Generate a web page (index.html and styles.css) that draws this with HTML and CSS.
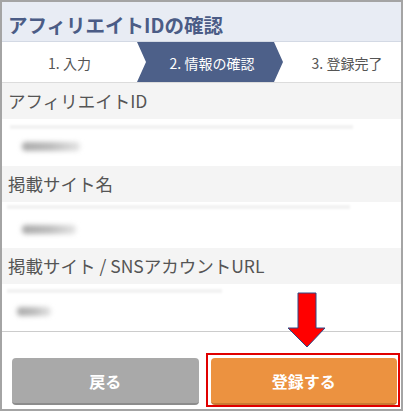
FILE: index.html
```html
<!DOCTYPE html>
<html lang="ja">
<head>
<meta charset="utf-8">
<link rel="stylesheet" href="styles.css">
</head>
<body>
<div class="frame">
  <header class="head">アフィリエイトIDの確認</header>
  <nav class="steps">
    <div class="step">1. 入力</div>
    <div class="step step-active">2. 情報の確認</div>
    <div class="step step-last">3. 登録完了</div>
  </nav>
  <div class="label">アフィリエイトID</div>
  <div class="value v1"><div class="line"></div><div class="blur"></div></div>
  <div class="label">掲載サイト名</div>
  <div class="value v2"><div class="line"></div><div class="blur"></div></div>
  <div class="label">掲載サイト / SNSアカウントURL</div>
  <div class="value v3"><div class="line"></div><div class="blur"></div></div>
  <footer class="foot">
    <button class="btn btn-back">戻る</button>
    <div class="submit-wrap"><button class="btn btn-submit">登録する</button></div>
  </footer>
  <svg class="arrow" width="40" height="58" viewBox="0 0 40 58">
    <polygon points="11,1 29,1 29,36 38,36 20,55 1,36 11,36" fill="#ff0000" stroke="#2f4a86" stroke-width="1"/>
  </svg>
</div>
</body>
</html>
```
FILE: styles.css
```css
* { box-sizing: border-box; }
html, body { margin: 0; padding: 0; background: #fff; }
body {
  font-family: "Noto Sans CJK JP", "Noto Sans", sans-serif;
}
.frame {
  position: relative;
  width: 403px;
  height: 411px;
  border: 2px solid #a4a4a4;
  background: #fff;
  overflow: hidden;
}
.head {
  height: 40px;
  background: #e8ecf4;
  border-bottom: 1px solid #d3d9e4;
  color: #4b5c86;
  font-size: 19.5px;
  font-weight: 700;
  line-height: 39px;
  padding: 3px 0 0 6px;
}
.steps {
  display: grid;
  grid-template-columns: 135px 146px 1fr;
  height: 41px;
  border-bottom: 1px solid #dcdcdc;
  background: #fff;
}
.step {
  display: flex;
  align-items: center;
  justify-content: center;
  font-size: 14px;
  color: #555;
  padding-top: 1px;
}
.step-active {
  background: #4d6089;
  color: #fff;
  clip-path: polygon(0 0, 137px 0, 146px 50%, 137px 100%, 0 100%, 9px 50%);
  padding-left: 4px;
}
.step-last { padding-left: 10px; }
.label {
  height: 36px;
  background: #f4f4f4;
  color: #555;
  font-size: 17.5px;
  line-height: 36px;
  padding-left: 6px;
}
.value {
  position: relative;
  height: 47px;
  background: #fff;
}
.v2 { height: 46px; }
.line {
  position: absolute;
  height: 4px;
  background: #f2f2f2;
  filter: blur(1px);
}
.blur {
  position: absolute;
  height: 9px;
  border-radius: 4px;
  background: linear-gradient(90deg, #aaaaaa 0%, #bcbcbc 50%, #e4e4e4 100%);
  filter: blur(2.5px);
}
.v1 .line { top: 6px; left: 8px; width: 343px; }
.v1 .blur { top: 23px; left: 20px; width: 58px; }
.v2 .line { top: 3px; left: 5px; width: 343px; }
.v2 .blur { top: 23px; left: 20px; width: 54px; }
.v3 .line { top: 5px; left: 5px; width: 215px; }
.v3 .blur { top: 23px; left: 15px; width: 34px; }
.v3 { border-bottom: 1px solid #cccccc; height: 48px; }
.foot {
  display: grid;
  grid-template-columns: 1fr 1fr;
  gap: 12px;
  padding: 26px 4px 0 10px;
}
.btn {
  height: 47px;
  border: 0;
  border-radius: 4px;
  color: #fff;
  font-family: "Noto Sans CJK JP", "Noto Sans", sans-serif;
  font-size: 16px;
  font-weight: 700;
  padding: 0;
  width: 100%;
}
.btn-back {
  background: #a9a9a9;
  border-bottom: 2px solid #8c8c8c;
}
.btn-submit {
  background: #ec9240;
  border-bottom: 2px solid #c97a33;
}
.submit-wrap { position: relative; }
.submit-wrap::after {
  content: "";
  position: absolute;
  left: -5px;
  right: -3px;
  top: -5px;
  bottom: -2px;
  border: 2px solid #e00000;
}
.arrow {
  position: absolute;
  left: 285px;
  top: 290px;
}
```
